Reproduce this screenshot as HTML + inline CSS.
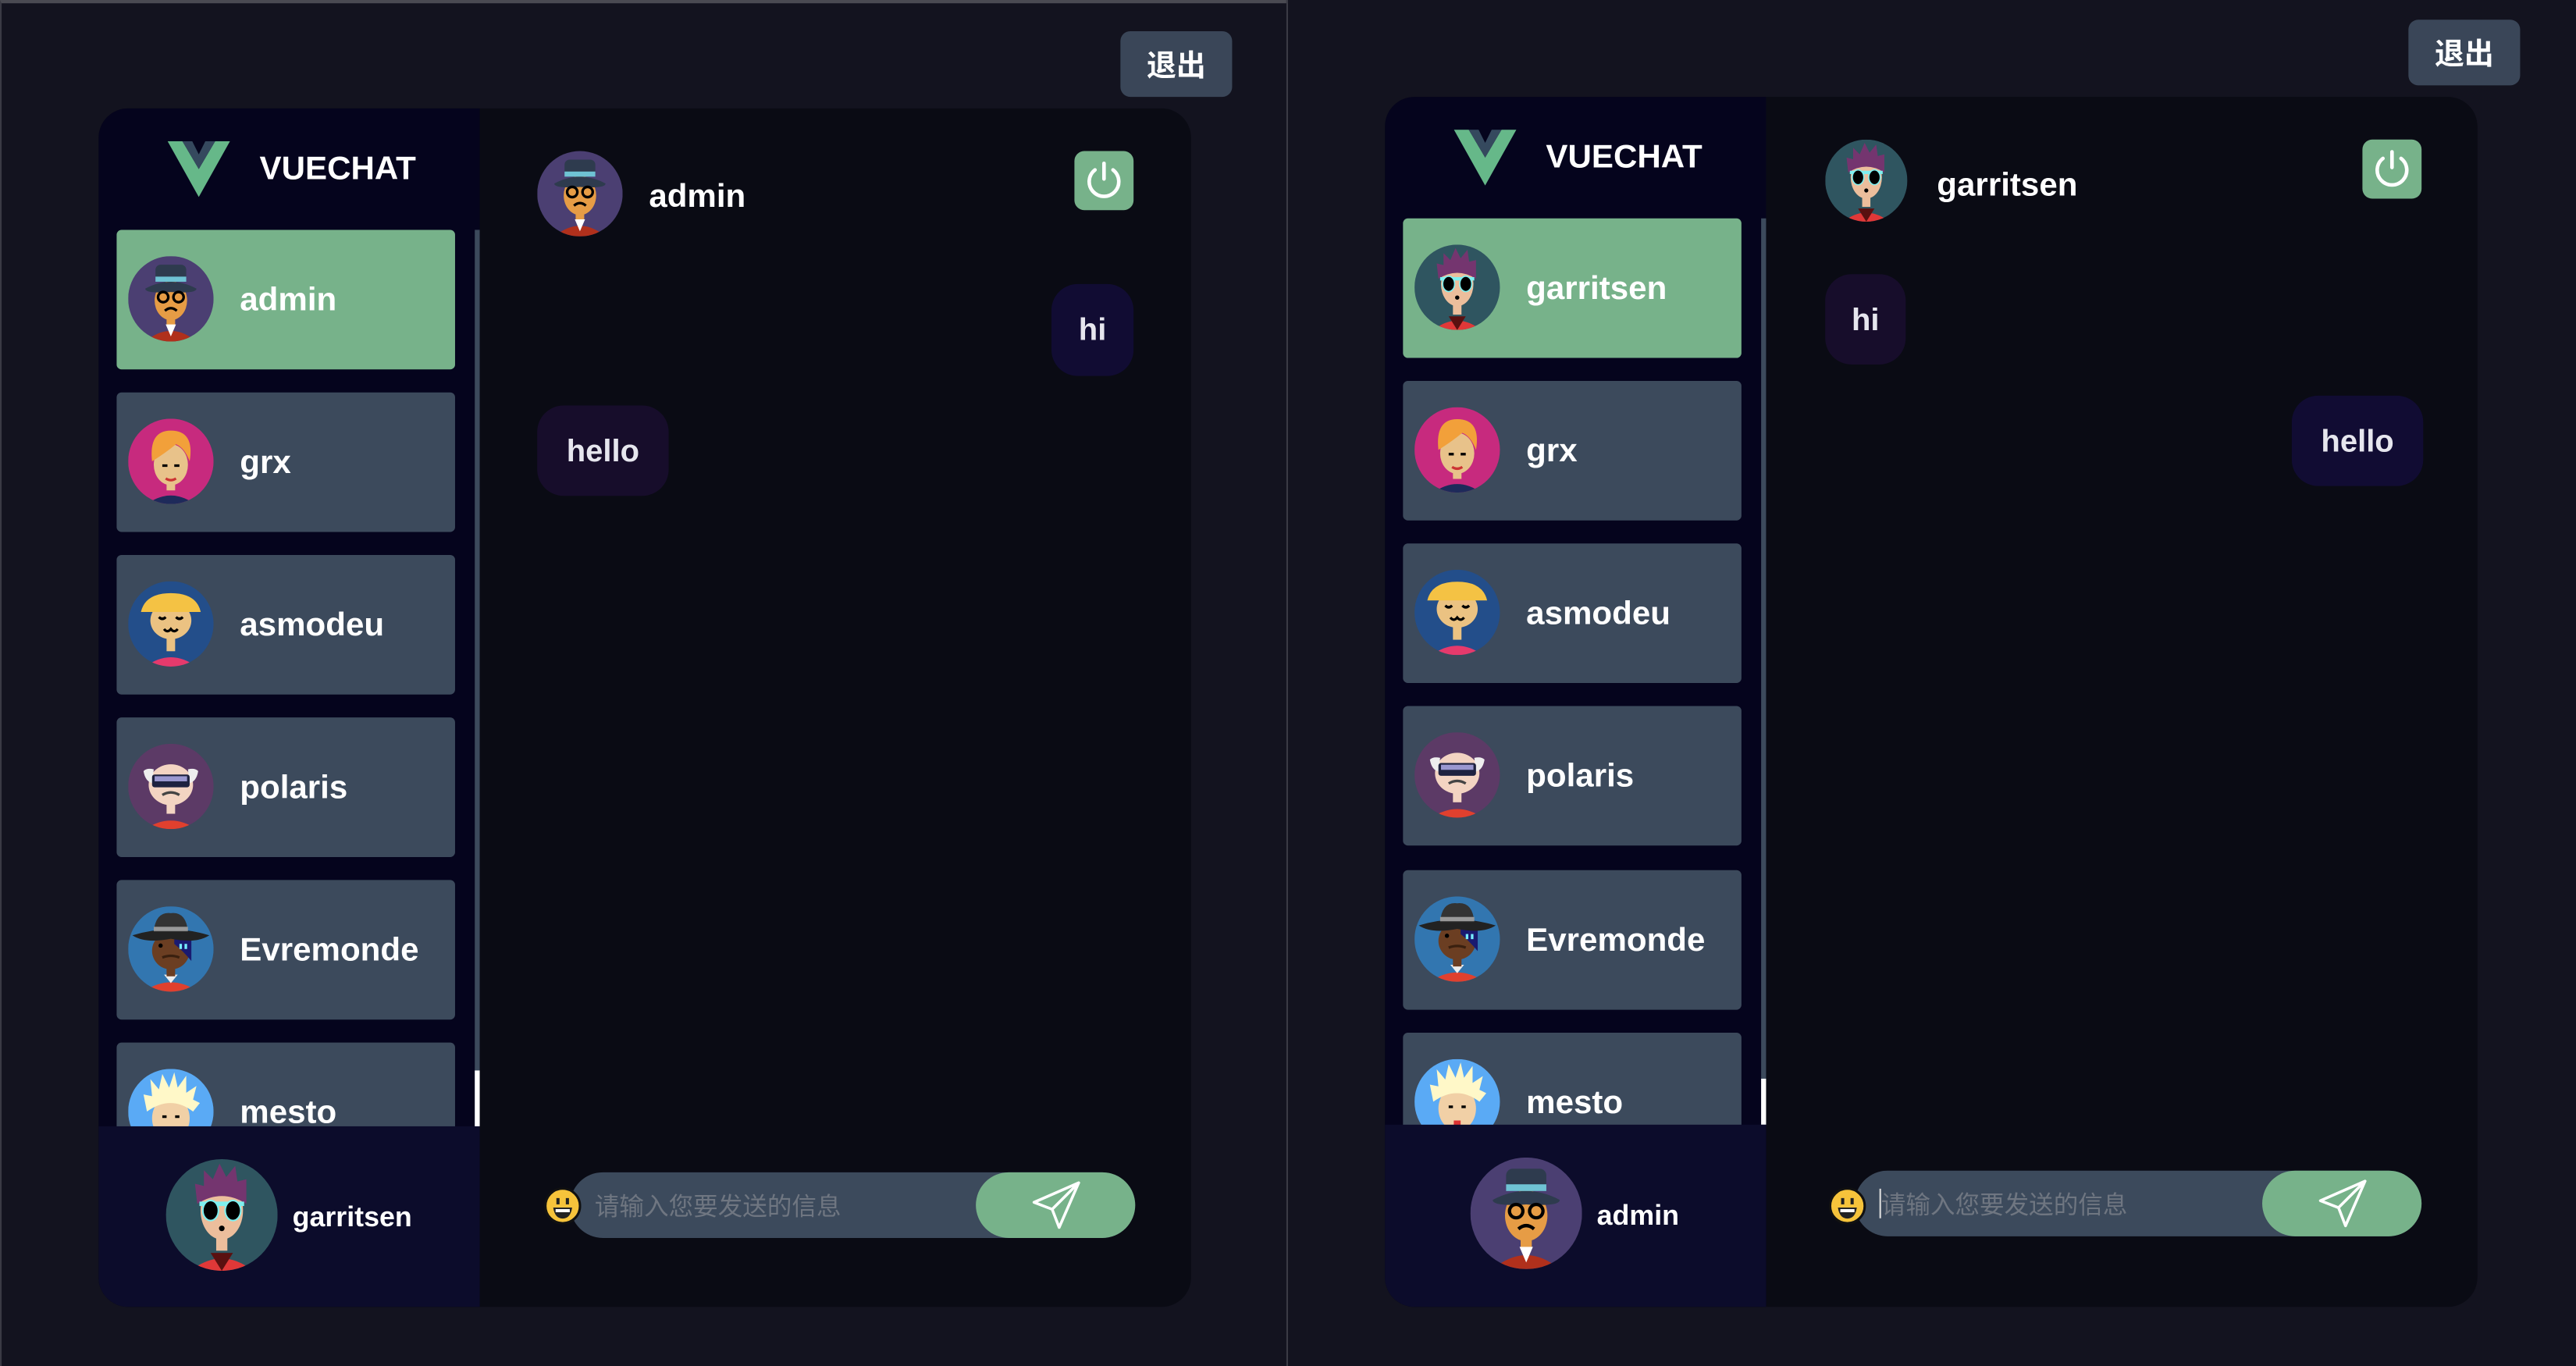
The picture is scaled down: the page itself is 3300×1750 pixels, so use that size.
<!DOCTYPE html>
<html><head><meta charset="utf-8">
<style>
*{box-sizing:border-box;margin:0;padding:0}
html,body{width:3300px;height:1750px;overflow:hidden;background:#13131f}
#root{position:absolute;left:0;top:0;width:1568px;height:832px;transform:scale(2.10459,2.1034);transform-origin:0 0;background:#13131f;font-family:"Liberation Sans","Noto Sans CJK SC",sans-serif}
.pane{position:absolute;top:0;height:832px;overflow:hidden}
.exit{position:absolute;width:68px;height:40px;background:#3a4658;border-radius:6px;color:#fff;font-weight:bold;font-size:18px;line-height:40px;text-align:center;font-family:"Noto Sans CJK SC","Liberation Sans",sans-serif}
.card{position:absolute;border-radius:18px;overflow:hidden;background:#0a0b14}
.side{position:absolute;left:0;top:0;width:232px;bottom:0;background:#05041d}
.me{position:absolute;left:0;width:232px;bottom:0;height:110px;background:#0c0c2b}
.logo{position:absolute;left:42px;top:20px;width:38px;height:34px}
.brand{position:absolute;left:98px;top:26px;color:#fff;font-weight:bold;font-size:20px}
.item{position:absolute;left:11px;width:206px;height:85px;background:#3c4a5c;border-radius:3px}
.item.sel{background:#77b28a}
.item svg{position:absolute;left:7px;top:16px;width:52px;height:52px}
.item span{position:absolute;left:75px;top:32px;color:#fff;font-weight:bold;font-size:20px}
.track{position:absolute;left:229px;width:3px;background:#3c4a5c}
.thumb{position:absolute;left:229px;width:3px;background:#fff}
.bub{position:absolute;border-radius:16px;color:#e6e6ee;font-weight:bold;font-size:19px;text-align:center;line-height:57px}
.pw{position:absolute;width:36px;height:36px;background:#77b28a;border-radius:6px}
.inp{position:absolute;height:40px;background:#3c4a5c;border-radius:20px}
.ph{position:absolute;left:15px;top:10px;font-size:15px;color:#6f7681;font-family:"Noto Sans CJK SC","Liberation Sans",sans-serif}
.send{position:absolute;right:0;top:0;width:97px;height:40px;background:#77b28a;border-radius:20px}
.emo{position:absolute;width:23px;height:23px;z-index:2}
</style></head><body>
<svg width="0" height="0" style="position:absolute">
<defs>
<clipPath id="cc"><circle cx="50" cy="50" r="50"/></clipPath>
<symbol id="admin" viewBox="0 0 100 100"><g clip-path="url(#cc)"><rect width="100" height="100" fill="#4b3f72"/><path d="M20 100 Q50 75 80 100Z" fill="#b0301c"/><rect x="45" y="68" width="10" height="14" fill="#e69c45"/><path d="M44 80 L50 94 L56 80Z" fill="#fff"/><ellipse cx="50" cy="52" rx="19" ry="23" fill="#e69c45"/><path d="M20 38 Q50 22 80 38 Q80 44 50 42 Q20 44 20 38Z" fill="#2e3b4e"/><rect x="32" y="10" width="36" height="20" rx="6" fill="#2e3b4e"/><rect x="32" y="24" width="36" height="6" fill="#6fc3d4"/><circle cx="41" cy="48" r="6" fill="none" stroke="#000" stroke-width="3"/><circle cx="59" cy="48" r="6" fill="none" stroke="#000" stroke-width="3"/><path d="M43 64 Q50 58 57 64" stroke="#000" stroke-width="3" fill="none"/></g></symbol>
<symbol id="grx" viewBox="0 0 100 100"><g clip-path="url(#cc)"><rect width="100" height="100" fill="#c72a7e"/><path d="M22 100 Q50 80 78 100Z" fill="#1e2a5a"/><rect x="45" y="70" width="10" height="14" fill="#e8c28a"/><ellipse cx="50" cy="54" rx="20" ry="24" fill="#e8c28a"/><path d="M28 50 Q24 14 50 14 Q78 14 72 50 Q66 34 56 30 Q44 40 28 50Z" fill="#f2a03a"/><path d="M40 55 h6 M54 55 h6" stroke="#000" stroke-width="3"/><path d="M44 70 Q50 74 56 70" stroke="#c33" stroke-width="3" fill="none"/></g></symbol>
<symbol id="asm" viewBox="0 0 100 100"><g clip-path="url(#cc)"><rect width="100" height="100" fill="#234e8a"/><path d="M20 100 Q50 78 80 100Z" fill="#e53a6c"/><rect x="45" y="66" width="10" height="16" fill="#ebc282"/><ellipse cx="50" cy="46" rx="24" ry="22" fill="#ebc282"/><path d="M15 36 Q20 14 50 14 Q80 14 85 36Z" fill="#f4c244"/><path d="M36 42 Q40 46 44 42 M56 42 Q60 46 64 42" stroke="#000" stroke-width="3" fill="none"/><path d="M42 56 Q46 61 50 56 Q54 61 58 56" stroke="#000" stroke-width="3" fill="none"/></g></symbol>
<symbol id="pol" viewBox="0 0 100 100"><g clip-path="url(#cc)"><rect width="100" height="100" fill="#5c3a66"/><path d="M20 100 Q50 80 80 100Z" fill="#e0402e"/><rect x="45" y="66" width="10" height="16" fill="#f3d4c2"/><ellipse cx="50" cy="48" rx="26" ry="24" fill="#f3d4c2"/><path d="M18 32 Q22 28 30 30 L28 46 Q20 44 18 32Z M82 32 Q78 28 70 30 L72 46 Q80 44 82 32Z" fill="#eee"/><rect x="28" y="36" width="44" height="15" rx="3" fill="#1e2240"/><rect x="31" y="38" width="38" height="6" fill="#9a98d0"/><path d="M40 60 Q50 54 60 60" stroke="#444" stroke-width="3" fill="none"/></g></symbol>
<symbol id="evr" viewBox="0 0 100 100"><g clip-path="url(#cc)"><rect width="100" height="100" fill="#3276b0"/><path d="M18 100 Q50 78 82 100Z" fill="#e0402e"/><path d="M42 80 L50 90 L58 80Z" fill="#eee"/><rect x="45" y="68" width="10" height="14" fill="#6b3e22"/><ellipse cx="50" cy="52" rx="22" ry="22" fill="#6b3e22"/><path d="M54 34 H74 V64 Q64 52 54 44Z" fill="#1a1a70"/><path d="M5 34 Q50 20 95 34 Q80 44 50 38 Q20 44 5 34Z" fill="#222"/><path d="M30 30 Q32 6 50 8 Q68 6 70 30Z" fill="#333"/><rect x="30" y="24" width="40" height="5" fill="#999"/><rect x="60" y="44" width="3" height="6" fill="#7ef"/><rect x="66" y="44" width="3" height="6" fill="#7ef"/><circle cx="38" cy="46" r="2.5" fill="#000"/><path d="M40 60 Q50 56 60 60" stroke="#3a200f" stroke-width="3" fill="none"/></g></symbol>
<symbol id="mes" viewBox="0 0 100 100"><g clip-path="url(#cc)"><rect width="100" height="100" fill="#5aaaf5"/><ellipse cx="50" cy="58" rx="22" ry="26" fill="#f1d0a6"/><path d="M22 50 L18 30 L28 32 L26 12 L36 24 L40 6 L48 22 L54 4 L58 22 L68 8 L68 28 L80 20 L76 36 L84 40 L76 50 Q50 30 22 50Z" fill="#fff8c8"/><path d="M40 56 h5 M55 56 h5" stroke="#000" stroke-width="3"/><path d="M46 72 h8 v6 h-8z" fill="#d33"/></g></symbol>
<symbol id="gar" viewBox="0 0 100 100"><g clip-path="url(#cc)"><rect width="100" height="100" fill="#2f5560"/><path d="M22 100 Q50 78 78 100Z" fill="#e03838"/><path d="M40 84 L50 100 L60 84Z" fill="#5a1010"/><rect x="45" y="66" width="10" height="16" fill="#ecbe9c"/><ellipse cx="50" cy="46" rx="19" ry="26" fill="#ecbe9c"/><path d="M28 40 L26 22 L34 24 L34 10 L42 18 L48 4 L54 16 L62 6 L64 20 L72 18 L72 40 Q50 26 28 40Z" fill="#74356f"/><rect x="30" y="38" width="40" height="4" fill="#7ef0f0"/><ellipse cx="40" cy="46" rx="7" ry="9" fill="#000" stroke="#7ef0f0" stroke-width="1.5"/><ellipse cx="60" cy="46" rx="7" ry="9" fill="#000" stroke="#7ef0f0" stroke-width="1.5"/><circle cx="50" cy="62" r="2.5" fill="#000"/></g></symbol>
<symbol id="vlogo" viewBox="0 0 38 34"><path d="M0 0 H9 L19 17 L29 0 H38 L19 34Z" fill="#66b889"/><path d="M9 0 H15 L19 8 L23 0 H29 L19 17Z" fill="#35495e"/></symbol>
<symbol id="pwr" viewBox="0 0 36 36"><path d="M12.5 11.5 A9 9 0 1 0 23.5 11.5" fill="none" stroke="#fff" stroke-width="2.2" stroke-linecap="round"/><path d="M18 7.5 V17" stroke="#fff" stroke-width="2.2" stroke-linecap="round"/></symbol>
<symbol id="plane" viewBox="0 0 40 40"><path d="M36 4 L4 18 L17 23 Z M36 4 L17 23 L22 36 Z" fill="none" stroke="#fff" stroke-width="2" stroke-linejoin="round"/></symbol>
<symbol id="emo" viewBox="0 0 24 24"><circle cx="12" cy="12" r="11" fill="#f6c33b" stroke="#111" stroke-width="1.5"/><rect x="8" y="7" width="2" height="4" fill="#222"/><rect x="14" y="7" width="2" height="4" fill="#222"/><path d="M6 13 H18 Q17 20 12 20 Q7 20 6 13Z" fill="#222"/><rect x="7.5" y="14" width="9" height="2" fill="#fff"/></symbol>
</defs></svg>

<div id="root">
<div class="pane" style="left:0;width:783px;border-left:1px solid #3a3a44;border-top:2px solid #4a4a52;background:#13131f">
 <div class="exit" style="left:681px;top:17px">退出</div>
 <div class="card" style="left:59px;top:64px;width:665px;height:730px">
  <div class="side">
   <svg class="logo"><use href="#vlogo"/></svg>
   <div class="brand">VUECHAT</div>
   <div class="item sel" style="top:74px"><svg><use href="#admin"/></svg><span>admin</span></div>
   <div class="item" style="top:173px"><svg><use href="#grx"/></svg><span>grx</span></div>
   <div class="item" style="top:272px"><svg><use href="#asm"/></svg><span>asmodeu</span></div>
   <div class="item" style="top:371px"><svg><use href="#pol"/></svg><span>polaris</span></div>
   <div class="item" style="top:470px"><svg><use href="#evr"/></svg><span>Evremonde</span></div>
   <div class="item" style="top:569px"><svg><use href="#mes"/></svg><span>mesto</span></div>
   <div class="track" style="top:74px;height:546px"></div>
   <div class="thumb" style="top:586px;height:34px"></div>
   <div class="me"><svg style="position:absolute;left:41px;top:20px;width:68px;height:68px"><use href="#gar"/></svg><span style="position:absolute;left:118px;top:46px;color:#fff;font-weight:bold;font-size:17px">garritsen</span></div>
  </div>
  <svg style="position:absolute;left:267px;top:26px;width:52px;height:52px"><use href="#admin"/></svg>
  <span style="position:absolute;left:335px;top:43px;color:#fff;font-weight:bold;font-size:20px">admin</span>
  <svg class="pw" style="left:594px;top:26px"><use href="#pwr"/></svg>
  <div class="bub" style="left:580px;top:107px;width:50px;height:56px;background:#110c33">hi</div>
  <div class="bub" style="left:267px;top:181px;width:80px;height:55px;background:#170d2b">hello</div>
  <div class="inp" style="left:287px;top:648px;width:344px"><span class="ph">请输入您要发送的信息</span><div class="send"><svg style="position:absolute;left:32px;top:3px;width:34px;height:34px"><use href="#plane"/></svg></div></div>
  <svg class="emo" style="left:271px;top:657px"><use href="#emo"/></svg>
 </div>
</div>
<div style="position:absolute;left:783px;top:0;width:1px;height:832px;background:#3a3a44"></div>
<div class="pane" style="left:784px;width:784px;background:#13131f">
 <div class="exit" style="left:682px;top:12px">退出</div>
 <div class="card" style="left:59px;top:59px;width:665px;height:737px">
  <div class="side">
   <svg class="logo"><use href="#vlogo"/></svg>
   <div class="brand">VUECHAT</div>
   <div class="item sel" style="top:74px"><svg><use href="#gar"/></svg><span>garritsen</span></div>
   <div class="item" style="top:173px"><svg><use href="#grx"/></svg><span>grx</span></div>
   <div class="item" style="top:272px"><svg><use href="#asm"/></svg><span>asmodeu</span></div>
   <div class="item" style="top:371px"><svg><use href="#pol"/></svg><span>polaris</span></div>
   <div class="item" style="top:471px"><svg><use href="#evr"/></svg><span>Evremonde</span></div>
   <div class="item" style="top:570px"><svg><use href="#mes"/></svg><span>mesto</span></div>
   <div class="track" style="top:74px;height:552px"></div>
   <div class="thumb" style="top:598px;height:28px"></div>
   <div class="me" style="height:111px"><svg style="position:absolute;left:52px;top:20px;width:68px;height:68px"><use href="#admin"/></svg><span style="position:absolute;left:129px;top:46px;color:#fff;font-weight:bold;font-size:17px">admin</span></div>
  </div>
  <svg style="position:absolute;left:268px;top:26px;width:50px;height:50px"><use href="#gar"/></svg>
  <span style="position:absolute;left:336px;top:43px;color:#fff;font-weight:bold;font-size:20px">garritsen</span>
  <svg class="pw" style="left:595px;top:26px"><use href="#pwr"/></svg>
  <div class="bub" style="left:268px;top:108px;width:49px;height:55px;background:#170d2b">hi</div>
  <div class="bub" style="left:552px;top:182px;width:80px;height:55px;background:#110c33">hello</div>
  <div class="inp" style="left:286px;top:654px;width:345px"><span class="ph" style="left:16px">请输入您要发送的信息</span><div style="position:absolute;left:15px;top:11px;width:1px;height:18px;background:#ddd"></div><div class="send"><svg style="position:absolute;left:32px;top:3px;width:34px;height:34px"><use href="#plane"/></svg></div></div>
  <svg class="emo" style="left:270px;top:664px"><use href="#emo"/></svg>
 </div>
</div>
</div>
</body></html>
